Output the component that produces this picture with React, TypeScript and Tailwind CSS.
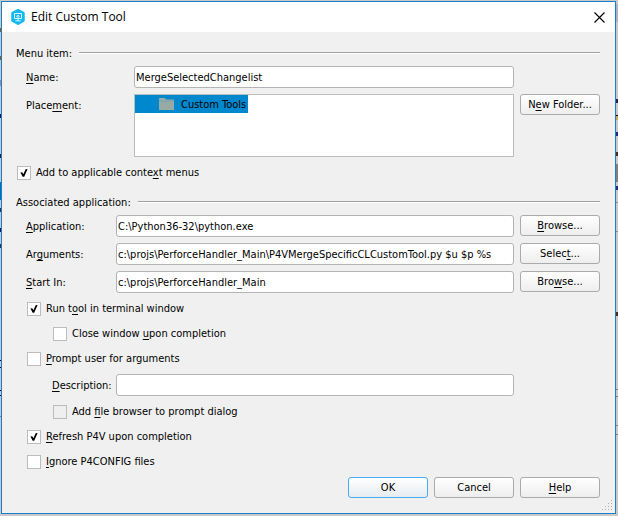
import { useId, type ReactNode } from "react";

const fieldClass =
  "h-[22px] w-full min-w-0 rounded-[3px] border border-[#b4b4b4] bg-white px-px text-[11px] text-black outline-none";

function Key({ children }: { children: ReactNode }) {
  return <u className="decoration-1 underline-offset-2">{children}</u>;
}

function PushButton({ children, primary = false }: { children: ReactNode; primary?: boolean }) {
  return (
    <button
      type="button"
      className={
        primary
          ? "h-[21px] w-20 shrink-0 rounded-[3px] border border-[#44aef5] bg-linear-to-b from-white to-[#e6ecf1] leading-4"
          : "h-[21px] w-20 shrink-0 rounded-[3px] border border-[#ababab] bg-linear-to-b from-white to-[#eeeeee] leading-4"
      }
    >
      {children}
    </button>
  );
}

function SectionHeading({ children }: { children: ReactNode }) {
  return (
    <div className="mb-[5px] flex h-4 items-center gap-[7px]">
      <h2 className="pt-0.5">{children}</h2>
      <hr className="h-0.5 grow border-t border-b border-t-[#9f9f9f] border-b-white" />
    </div>
  );
}

function Check({
  children,
  checked = false,
  disabled = false,
  indent = "pl-[11px]",
}: {
  children: ReactNode;
  checked?: boolean;
  disabled?: boolean;
  indent?: string;
}) {
  const id = useId();
  return (
    <div className={`flex h-[25px] items-center gap-[5px] ${indent}`}>
      <span className="grid size-3.5 place-items-center">
        <input
          id={id}
          type="checkbox"
          defaultChecked={checked}
          disabled={disabled}
          className="peer col-start-1 row-start-1 size-3.5 appearance-none border border-[#bcbcbc] bg-white disabled:bg-[#efefef]"
        />
        <svg
          viewBox="0 0 14 14"
          className="pointer-events-none invisible col-start-1 row-start-1 size-3.5 peer-checked:visible"
          aria-hidden="true"
        >
          <path d="M3.4 6.4 5.2 6.2 6.4 8.3 8.6 3.3 10.6 3 7.2 10.7H5.7Z" fill="#000" />
        </svg>
      </span>
      <label htmlFor={id}>{children}</label>
    </div>
  );
}

function PathRow({
  label,
  name,
  value,
  action,
}: {
  label: ReactNode;
  name: string;
  value: string;
  action: ReactNode;
}) {
  return (
    <div className="flex gap-1.5">
      <div className="flex grow items-center pl-2.5">
        <label htmlFor={name} className="w-[90px] shrink-0 pt-0.5">
          {label}
        </label>
        <input id={name} type="text" defaultValue={value} className={fieldClass} />
      </div>
      <PushButton>{action}</PushButton>
    </div>
  );
}

/* Slivers of the window behind the dialog, seen past its left and right edges. */
const leftEdge = [
  "mt-[27px] h-1 bg-[#8a5a2a]",
  "mt-6 h-1 bg-[#8a5a2a]",
  "mt-5 h-1.5 bg-[#a08a98]",
  "mt-7 h-1 bg-[#101060]",
  "mt-9 h-1 bg-[#222222]",
  "mt-6 h-[18px] bg-[#0070b8]",
  "mt-2 h-1 bg-[#333333]",
  "mt-4 h-1 bg-[#101060]",
  "mt-3 h-1 bg-[#333333]",
  "mt-28 h-px bg-black",
  "mt-1.5 h-px bg-black",
  "mt-[22px] h-px bg-black",
  "mt-1 h-px bg-black",
  "mt-5 h-px bg-[#808080]",
];

const rightEdge = [
  "mt-[3px] h-[18px] bg-[#a9b4c4]",
  "mt-[77px] h-1 bg-[#2a2050]",
  "mt-3 h-px bg-black",
  "mt-0 h-1 bg-[#c8a860]",
  "mt-3 h-1 bg-[#203080]",
  "mt-4 h-1 bg-[#4a3020]",
  "mt-2 h-[18px] bg-[#808080]",
  "mt-1 h-1 bg-[#203080]",
  "mt-3 h-px bg-[#8c8c8c]",
  "mt-7 h-px bg-[#8c8c8c]",
  "mt-20 h-1 bg-[#4a3020]",
  "mt-[73px] h-px bg-[#808080]",
  "mt-1.5 h-px bg-[#808080]",
  "mt-7 h-px bg-[#808080]",
  "mt-2 h-px bg-[#808080]",
];

function Edge({ marks, width }: { marks: string[]; width: string }) {
  return (
    <div className={`shrink-0 ${width}`} aria-hidden="true">
      {marks.map((mark, i) => (
        <div key={i} className={mark} />
      ))}
    </div>
  );
}

export default function App() {
  return (
    <div className="flex min-h-screen items-start bg-[#c9c9c9] pt-px pb-0.5 font-['DejaVu_Sans_Condensed','DejaVu_Sans',sans-serif] text-[11px] leading-4 whitespace-nowrap text-black">
      <Edge marks={leftEdge} width="w-px" />
      <div role="dialog" aria-labelledby="dialog-title" className="grow border border-[#1a7fc9] bg-[#f0f0f0]">
        <header className="flex h-[30px] items-center bg-white px-[9px]">
          <svg viewBox="0 0 14 16" className="h-4 w-3.5" aria-hidden="true">
            <path d="M7 0.3 13.2 3.6V12.2L7 15.6 0.8 12.2V3.6Z" fill="#14b9f2" stroke="#14b9f2" strokeLinejoin="round" />
            <path d="M3.5 4.5H10.5V9.5H3.5Z" fill="none" stroke="#d9f5ff" />
            <path d="M7 6V12M5.4 7.8 7 6.2 8.6 7.8M4.5 11.8H9.5" fill="none" stroke="#d9f5ff" />
          </svg>
          <h1 id="dialog-title" className="grow pl-1.5 font-['Open_Sans',sans-serif] text-xs leading-4">
            Edit Custom Tool
          </h1>
          <button type="button" aria-label="Close" className="p-px">
            <svg viewBox="0 0 11 11" className="size-[11px]" aria-hidden="true">
              <path d="M0.5 0.5 10.5 10.5M10.5 0.5 0.5 10.5" fill="none" stroke="#000" strokeWidth="1.1" />
            </svg>
          </button>
        </header>

        <form className="relative pt-[13px] pr-[15px] pb-[15px] pl-3.5">
          <SectionHeading>Menu item:</SectionHeading>
          <div className="flex gap-1.5">
            <div className="flex grow items-center pl-2.5">
              <label htmlFor="name" className="w-[108px] shrink-0 pt-0.5">
                <Key>N</Key>ame:
              </label>
              <input id="name" type="text" defaultValue="MergeSelectedChangelist" className={fieldClass} />
            </div>
            <div className="w-20 shrink-0" />
          </div>
          <div className="mt-1.5 flex items-start gap-1.5">
            <div className="flex grow items-start pl-2.5">
              <span id="placement" className="w-[108px] shrink-0 pt-1">
                Place<Key>m</Key>ent:
              </span>
              <ul role="tree" aria-labelledby="placement" className="h-[63px] grow border border-[#bcbcbc] bg-white">
                <li
                  role="treeitem"
                  aria-selected="true"
                  className="flex h-[18px] w-[113px] items-center gap-[7px] bg-[#0088cf] pl-6"
                >
                  <svg viewBox="0 0 15 12" className="h-3 w-[15px] shrink-0" aria-hidden="true">
                    <path d="M0 0H6L7 1.5H15V12H0Z" fill="#97aaa6" />
                    <path d="M0 3H15" stroke="#5a9dba" strokeWidth="0.6" />
                  </svg>
                  <span className="pt-0.5">Custom Tools</span>
                </li>
              </ul>
            </div>
            <PushButton>
              N<Key>e</Key>w Folder...
            </PushButton>
          </div>
          <div className="mt-[3px] mb-[9px]">
            <Check checked indent="pl-px">
              Add to applicable conte<Key>x</Key>t menus
            </Check>
          </div>

          <SectionHeading>Associated application:</SectionHeading>
          <div className="flex flex-col gap-1.5">
            <PathRow
              name="application"
              label={<><Key>A</Key>pplication:</>}
              value="C:\Python36-32\python.exe"
              action={<><Key>B</Key>rowse...</>}
            />
            <PathRow
              name="arguments"
              label={<>Ar<Key>g</Key>uments:</>}
              value="c:\projs\PerforceHandler_Main\P4VMergeSpecificCLCustomTool.py $u $p %s"
              action={<>Selec<Key>t</Key>...</>}
            />
            <PathRow
              name="start-in"
              label={<><Key>S</Key>tart In:</>}
              value="c:\projs\PerforceHandler_Main"
              action={<>Bro<Key>w</Key>se...</>}
            />
          </div>

          <div className="py-[3px]">
            <Check checked>
              Run t<Key>o</Key>ol in terminal window
            </Check>
            <Check indent="pl-[37px]">
              Close window <Key>u</Key>pon completion
            </Check>
            <Check>
              <Key>P</Key>rompt user for arguments
            </Check>
            <div className="my-[3px] flex gap-1.5">
              <div className="flex grow items-center pl-9">
                <label htmlFor="description" className="w-16 shrink-0 pt-0.5">
                  <Key>D</Key>escription:
                </label>
                <input id="description" type="text" className={fieldClass} />
              </div>
              <div className="w-20 shrink-0" />
            </div>
            <Check disabled indent="pl-[37px]">
              Add <Key>f</Key>ile browser to prompt dialog
            </Check>
            <Check checked>
              <Key>R</Key>efresh P4V upon completion
            </Check>
            <Check>
              <Key>I</Key>gnore P4CONFIG files
            </Check>
          </div>

          <div className="flex justify-end gap-1.5">
            <PushButton primary>OK</PushButton>
            <PushButton>Cancel</PushButton>
            <PushButton>
              <Key>H</Key>elp
            </PushButton>
          </div>

          <svg viewBox="0 0 11 11" className="absolute right-0.5 bottom-0.5 size-[11px]" aria-hidden="true">
            <path
              d="M9 0h1v1h-1zM6 3h1v1h-1zM9 3h1v1h-1zM3 6h1v1h-1zM6 6h1v1h-1zM9 6h1v1h-1zM0 9h1v1h-1zM3 9h1v1h-1zM6 9h1v1h-1zM9 9h1v1h-1z"
              fill="#b0b0b0"
            />
          </svg>
        </form>
      </div>
      <Edge marks={rightEdge} width="w-0.5" />
    </div>
  );
}
